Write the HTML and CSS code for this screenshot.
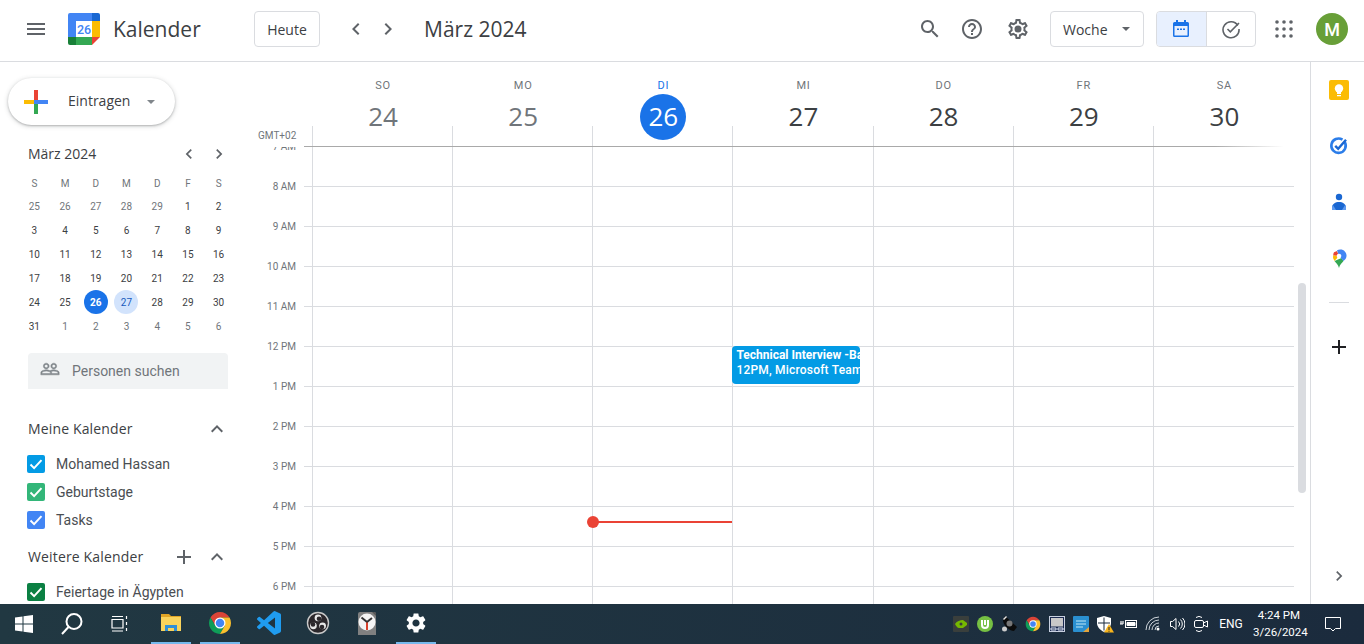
FILE: index.html
```html
<!DOCTYPE html>
<html lang="de">
<head>
  <meta charset="UTF-8" />
  <title>Kalender - März 2024</title>
  <link rel="stylesheet" href="styles.css">
</head>
<body>
  <!-- Shared icons -->
  <svg class="icon-defs" width="0" height="0">
    <symbol id="i-left" viewBox="0 0 24 24"><path d="M15.41 7.41L14 6l-6 6 6 6 1.41-1.41L10.83 12z"/></symbol>
    <symbol id="i-right" viewBox="0 0 24 24"><path d="M10 6L8.59 7.41 13.17 12l-4.58 4.59L10 18l6-6z"/></symbol>
    <symbol id="i-up" viewBox="0 0 24 24"><path d="M12 8l-6 6 1.41 1.41L12 10.83l4.59 4.58L18 14z"/></symbol>
    <symbol id="i-add" viewBox="0 0 24 24"><path d="M19 13h-6v6h-2v-6H5v-2h6V5h2v6h6v2z"/></symbol>
    <symbol id="i-check" viewBox="0 0 18 18"><path d="M3.5 9.5l3.6 3.6 7.4-8" fill="none" stroke="#fff" stroke-width="2"/></symbol>
    <symbol id="i-chrome" viewBox="0 0 48 48">
      <path fill="#db4437" d="M24 13H43.05A22 22 0 0 0 4.95 13L14.47 29.5Z"/>
      <path fill="#0f9d58" d="M14.47 29.5L4.95 13A22 22 0 0 0 24 46L33.53 29.5Z"/>
      <path fill="#fbc02d" d="M33.53 29.5L24 46A22 22 0 0 0 43.05 13H24Z"/>
      <circle cx="24" cy="24" r="11" fill="#fff"/>
      <circle cx="24" cy="24" r="8.5" fill="#4285f4"/>
    </symbol>
  </svg>

  <div class="app">
    <header class="topbar">
      <div class="brand">
        <svg class="icon menu-icon" viewBox="0 0 24 24"><path d="M3 18h18v-2H3v2zm0-5h18v-2H3v2zm0-7v2h18V6H3z"/></svg>
        <svg class="logo" viewBox="0 0 32 32">
          <path fill="#4285f4" d="M2 0h22v8H8v16H0V2a2 2 0 0 1 2-2z"/>
          <path fill="#1967d2" d="M24 0h6a2 2 0 0 1 2 2v6h-8z"/>
          <path fill="#fbbc04" d="M24 8h8v16h-8z"/>
          <path fill="#34a853" d="M8 24h16v8H8z"/>
          <path fill="#188038" d="M0 24h8v8H2a2 2 0 0 1-2-2z"/>
          <path fill="#ea4335" d="M24 24h8l-8 8z"/>
          <rect x="8" y="8" width="16" height="16" fill="#fff"/>
          <text x="16" y="20.500" class="logo-num">26</text>
        </svg>
        <span class="brand-name">Kalender</span>
      </div>
      <button class="outline-btn today-btn">Heute</button>
      <svg class="icon nav-icon"><use href="#i-left"/></svg>
      <svg class="icon nav-icon next"><use href="#i-right"/></svg>
      <div class="top-title">März 2024</div>

      <div class="top-right">
        <svg class="icon" viewBox="0 0 24 24"><path d="M15.5 14h-.79l-.28-.27C15.41 12.59 16 11.11 16 9.5 16 5.91 13.09 3 9.5 3S3 5.91 3 9.5 5.91 16 9.5 16c1.61 0 3.09-.59 4.23-1.57l.27.28v.79l5 4.99L20.49 19l-4.99-5zm-6 0C7.01 14 5 11.99 5 9.5S7.01 5 9.5 5 14 7.01 14 9.5 11.99 14 9.5 14z"/></svg>
        <svg class="icon help-icon" viewBox="0 0 24 24"><path d="M11 18h2v-2h-2v2zm1-16C6.48 2 2 6.48 2 12s4.48 10 10 10 10-4.48 10-10S17.52 2 12 2zm0 18c-4.41 0-8-3.59-8-8s3.59-8 8-8 8 3.59 8 8-3.59 8-8 8zm0-14c-2.21 0-4 1.79-4 4h2c0-1.1.9-2 2-2s2 .9 2 2c0 2-3 1.75-3 5h2c0-2.25 3-2.5 3-5 0-2.21-1.79-4-4-4z"/></svg>
        <svg class="icon gear-icon" viewBox="0 0 24 24"><path d="M19.43 12.98c.04-.32.07-.64.07-.98 0-.34-.03-.66-.07-.98l2.11-1.65c.19-.15.24-.42.12-.64l-2-3.46c-.09-.16-.26-.25-.44-.25-.06 0-.12.01-.17.03l-2.49 1c-.52-.4-1.08-.73-1.69-.98l-.38-2.65C14.46 2.18 14.25 2 14 2h-4c-.25 0-.46.18-.49.42l-.38 2.65c-.61.25-1.17.59-1.69.98l-2.49-1c-.06-.02-.12-.03-.18-.03-.17 0-.34.09-.43.25l-2 3.46c-.13.22-.07.49.12.64l2.11 1.65c-.04.32-.07.65-.07.98 0 .33.03.66.07.98l-2.11 1.65c-.19.15-.24.42-.12.64l2 3.46c.09.16.26.25.44.25.06 0 .12-.01.17-.03l2.49-1c.52.4 1.08.73 1.69.98l.38 2.65c.03.24.24.42.49.42h4c.25 0 .46-.18.49-.42l.38-2.65c.61-.25 1.17-.59 1.69-.98l2.49 1c.06.02.12.03.18.03.17 0 .34-.09.43-.25l2-3.46c.12-.22.07-.49-.12-.64l-2.11-1.65zm-1.98-1.71c.04.31.05.52.05.73 0 .21-.02.43-.05.73l-.14 1.13.89.7 1.08.84-.7 1.21-1.27-.51-1.04-.42-.9.68c-.43.32-.84.56-1.25.73l-1.06.43-.16 1.13-.2 1.35h-1.4l-.19-1.35-.16-1.13-1.06-.43c-.43-.18-.83-.41-1.23-.71l-.91-.7-1.06.43-1.27.51-.7-1.21 1.08-.84.89-.7-.14-1.13c-.03-.31-.05-.54-.05-.74s.02-.43.05-.73l.14-1.13-.89-.7-1.08-.84.7-1.21 1.27.51 1.04.42.9-.68c.43-.32.84-.56 1.25-.73l1.06-.43.16-1.13.2-1.35h1.39l.19 1.35.16 1.13 1.06.43c.43.18.83.41 1.23.71l.91.7 1.06-.43 1.27-.51.7 1.21-1.07.85-.89.7.14 1.13zM12 8.5a3.5 3.5 0 1 0 0 7 3.5 3.5 0 0 0 0-7z"/></svg>
        <button class="outline-btn view-btn">Woche <span class="caret"></span></button>
        <div class="toggle">
          <div class="toggle-item active">
            <svg width="20" height="20" viewBox="0 0 20 20"><path fill="#1a73e8" d="M5 1h2v2h6V1h2v2h1.5A1.5 1.5 0 0 1 18 4.500v12a1.500 1.500 0 0 1-1.500 1.500h-13A1.500 1.500 0 0 1 2 16.500v-12A1.500 1.500 0 0 1 3.500 3H5zM3.500 7v9.500h13V7zM6 9.500h2v1.500H6zm3 0h2v1.500H9zm3 0h2v1.500h-2z"/></svg>
          </div>
          <div class="toggle-item">
            <svg width="20" height="20" viewBox="0 0 20 20" fill="none" stroke="#5f6368" stroke-width="1.600"><path d="M16.800 6.500A8 8 0 1 0 18 10"/><path d="M6.500 10l2.800 2.800L18 4"/></svg>
          </div>
        </div>
        <svg class="icon apps-icon" viewBox="0 0 24 24">
          <circle cx="5" cy="5" r="1.800"/><circle cx="12" cy="5" r="1.800"/><circle cx="19" cy="5" r="1.800"/>
          <circle cx="5" cy="12" r="1.800"/><circle cx="12" cy="12" r="1.800"/><circle cx="19" cy="12" r="1.800"/>
          <circle cx="5" cy="19" r="1.800"/><circle cx="12" cy="19" r="1.800"/><circle cx="19" cy="19" r="1.800"/>
        </svg>
        <div class="avatar">M</div>
      </div>
    </header>

    <div class="content">
      <!-- Left sidebar -->
      <aside class="sidebar">
        <button class="create-btn">
          <svg width="24" height="24" viewBox="0 0 24 24">
            <path fill="#ea4335" d="M10 0h4v10h-4z"/>
            <path fill="#4285f4" d="M14 10h10v4H14z"/>
            <path fill="#34a853" d="M10 14h4v10h-4z"/>
            <path fill="#fbbc04" d="M0 10h10v4H0z"/>
            <path fill="#4285f4" d="M10 10h4v4h-4z"/>
          </svg>
          <span class="create-label">Eintragen</span>
          <span class="caret create-caret"></span>
        </button>

        <div class="mini-head">
          <span class="mini-title">März 2024</span>
          <svg class="mini-nav"><use href="#i-left"/></svg>
          <svg class="mini-nav"><use href="#i-right"/></svg>
        </div>
        <div class="mini-grid">
          <span class="wd">S</span><span class="wd">M</span><span class="wd">D</span><span class="wd">M</span><span class="wd">D</span><span class="wd">F</span><span class="wd">S</span>
          <span class="off">25</span><span class="off">26</span><span class="off">27</span><span class="off">28</span><span class="off">29</span><span>1</span><span>2</span>
          <span>3</span><span>4</span><span>5</span><span>6</span><span>7</span><span>8</span><span>9</span>
          <span>10</span><span>11</span><span>12</span><span>13</span><span>14</span><span>15</span><span>16</span>
          <span>17</span><span>18</span><span>19</span><span>20</span><span>21</span><span>22</span><span>23</span>
          <span>24</span><span>25</span><span class="today">26</span><span class="picked">27</span><span>28</span><span>29</span><span>30</span>
          <span>31</span><span class="off">1</span><span class="off">2</span><span class="off">3</span><span class="off">4</span><span class="off">5</span><span class="off">6</span>
        </div>

        <div class="people-search">
          <svg width="20" height="20" viewBox="0 0 24 24"><path d="M16.500 13c-1.200 0-3.070.34-4.500 1-1.430-.67-3.300-1-4.500-1C5.330 13 1 14.080 1 16.250V19h22v-2.750c0-2.170-4.330-3.250-6.500-3.250zm-4 4.500h-10v-1.250c0-.54 2.560-1.750 5-1.750s5 1.210 5 1.750v1.250zm9 0H14v-1.250c0-.46-.2-.86-.52-1.220.88-.3 1.960-.53 3.020-.53 2.440 0 5 1.210 5 1.750v1.250zM7.500 12c1.930 0 3.500-1.570 3.500-3.500S9.430 5 7.500 5 4 6.570 4 8.500 5.570 12 7.500 12zm0-5.500c1.100 0 2 .9 2 2s-.9 2-2 2-2-.9-2-2 .9-2 2-2zm9 5.500c1.930 0 3.500-1.570 3.500-3.500S18.430 5 16.500 5 13 6.570 13 8.500s1.570 3.500 3.500 3.500zm0-5.500c1.100 0 2 .9 2 2s-.9 2-2 2-2-.9-2-2 .9-2 2-2z"/></svg>
          <span>Personen suchen</span>
        </div>

        <div class="cal-head first">
          <span>Meine Kalender</span>
          <svg class="icon"><use href="#i-up"/></svg>
        </div>
        <ul class="cal-list">
          <li><span class="check c-blue"><svg width="18" height="18"><use href="#i-check"/></svg></span>Mohamed Hassan</li>
          <li><span class="check c-green"><svg width="18" height="18"><use href="#i-check"/></svg></span>Geburtstage</li>
          <li><span class="check c-tasks"><svg width="18" height="18"><use href="#i-check"/></svg></span>Tasks</li>
        </ul>

        <div class="cal-head second">
          <span>Weitere Kalender</span>
          <svg class="icon add-icon"><use href="#i-add"/></svg>
          <svg class="icon"><use href="#i-up"/></svg>
        </div>
        <ul class="cal-list">
          <li><span class="check c-holiday"><svg width="18" height="18"><use href="#i-check"/></svg></span>Feiertage in Ägypten</li>
        </ul>
      </aside>

      <!-- Week view -->
      <main class="week">
        <div class="week-inner">
          <div class="week-head">
            <div class="gmt">GMT+02</div>
            <div class="head-days">
              <div class="head-day past"><span class="dow">SO</span><span class="num">24</span></div>
              <div class="head-day past"><span class="dow">MO</span><span class="num">25</span></div>
              <div class="head-day now"><span class="dow">DI</span><span class="num">26</span></div>
              <div class="head-day"><span class="dow">MI</span><span class="num">27</span></div>
              <div class="head-day"><span class="dow">DO</span><span class="num">28</span></div>
              <div class="head-day"><span class="dow">FR</span><span class="num">29</span></div>
              <div class="head-day"><span class="dow">SA</span><span class="num">30</span></div>
            </div>
          </div>
          <div class="head-rule"></div>
          <div class="week-body">
            <div class="time-col">
              <div class="hour">7 AM</div>
              <div class="hour">8 AM</div>
              <div class="hour">9 AM</div>
              <div class="hour">10 AM</div>
              <div class="hour">11 AM</div>
              <div class="hour">12 PM</div>
              <div class="hour">1 PM</div>
              <div class="hour">2 PM</div>
              <div class="hour">3 PM</div>
              <div class="hour">4 PM</div>
              <div class="hour">5 PM</div>
              <div class="hour">6 PM</div>
            </div>
            <div class="day-cols">
              <div class="day-col"></div>
              <div class="day-col"></div>
              <div class="day-col"><div class="now-line"></div></div>
              <div class="day-col">
                <div class="event">
                  <div class="event-title">Technical Interview -Back</div>
                  <div class="event-meta">12PM, Microsoft Teams</div>
                </div>
              </div>
              <div class="day-col"></div>
              <div class="day-col"></div>
              <div class="day-col"></div>
            </div>
          </div>
        </div>
        <div class="scroll-track"><div class="scroll-thumb"></div></div>
      </main>

      <!-- Right add-on strip -->
      <aside class="addons">
        <svg width="20" height="20" viewBox="0 0 20 20">
          <rect width="20" height="20" rx="2" fill="#fbbc04"/>
          <circle cx="10" cy="8.500" r="4.200" fill="#fff"/>
          <path fill="#fff" d="M8 12h4v2H8zM8 15h4v1.300H8z"/>
        </svg>
        <svg width="20" height="20" viewBox="0 0 20 20">
          <path d="M15.700 6A7.200 7.200 0 1 1 13.500 3.700" fill="none" stroke="#2b7de9" stroke-width="2.600"/>
          <path d="M6.200 9.800l3 3 7.800-9" fill="none" stroke="#1a67d2" stroke-width="2.400"/>
        </svg>
        <svg width="20" height="20" viewBox="0 0 20 20">
          <circle cx="10" cy="5" r="3.200" fill="#1a67d2"/>
          <path fill="#1a67d2" d="M3 18v-2.500C3 12 6.500 10 10 10s7 2 7 5.500V18z"/>
          <path fill="#5f9bf0" d="M3 18v-2.500c0-1 .3-1.900.9-2.600L7 18zM17 18v-2.500c0-1-.3-1.900-.9-2.600L13 18z"/>
        </svg>
        <svg class="maps-icon" width="20" height="20" viewBox="0 0 20 20">
          <path fill="#34a853" d="M5.500 12c1.500 2 3.800 3.700 4.500 7 .7-3.300 3-5 4.500-7l-2-3z"/>
          <path fill="#fbbc04" d="M4.200 6.200A6 6 0 0 0 5.500 12L10 7z"/>
          <path fill="#ea4335" d="M5 3.200A6 6 0 0 0 4.200 6.200L10 7l-2-5z"/>
          <path fill="#4285f4" d="M8 1.300A6.200 6.200 0 0 1 14.500 12L10 7z"/>
          <circle cx="10" cy="7" r="2.300" fill="#fff"/>
        </svg>
        <div class="addon-divider"></div>
        <svg class="addon-plus" width="24" height="24"><use href="#i-add"/></svg>
        <svg class="addon-more" width="20" height="20"><use href="#i-right"/></svg>
      </aside>
    </div>
  </div>

  <!-- Windows taskbar -->
  <footer class="taskbar">
    <div class="task-fixed">
      <svg width="20" height="20" viewBox="0 0 20 20"><path fill="#fff" d="M1 3.500l7.500-1v7H1zM9.500 2.300L19 1v8.500H9.500zM1 10.500h7.500v7l-7.500-1zM9.500 10.500H19V19l-9.500-1.300z"/></svg>
    </div>
    <div class="task-fixed">
      <svg width="24" height="24" viewBox="0 0 24 24" fill="none" stroke="#fff" stroke-width="2"><circle cx="14" cy="9.500" r="7.500"/><path d="M8.500 15l-6.500 7"/></svg>
    </div>
    <div class="task-fixed">
      <svg width="18" height="18" viewBox="0 0 18 18" fill="none" stroke="#fff" stroke-width="1.200"><path d="M1 4.500h11v8.500H1zM1 1.500h11M1 16h11M15.500 1v3M15.500 7v3M15.500 13v3"/></svg>
    </div>
    <div class="task-apps">
      <div class="task-app active">
        <svg width="24" height="24" viewBox="0 0 24 24">
          <path fill="#e0a526" d="M2 3h8l2 2h10v3H2z"/>
          <path fill="#f9d35c" d="M2 6h20v14H2z"/>
          <path fill="#2f8fd8" d="M6 14h12v6h-3v-3H9v3H6z"/>
        </svg>
      </div>
      <div class="task-app active"><svg width="24" height="24"><use href="#i-chrome"/></svg></div>
      <div class="task-app">
        <svg width="24" height="24" viewBox="0 0 24 24"><path fill="#1f9cf0" d="M23.150 2.587L18.210.21a1.494 1.494 0 0 0-1.705.29l-9.460 8.630-4.120-3.128a.999.999 0 0 0-1.276.057L.327 7.261A1 1 0 0 0 .326 8.740L3.899 12 .326 15.260a1 1 0 0 0 .001 1.479L1.650 17.940a.999.999 0 0 0 1.276.057l4.120-3.128 9.460 8.630a1.492 1.492 0 0 0 1.704.29l4.942-2.377A1.500 1.500 0 0 0 24 20.060V3.939a1.500 1.500 0 0 0-.85-1.352zm-5.146 14.861L10.826 12l7.178-5.448v10.896z"/></svg>
      </div>
      <div class="task-app">
        <svg width="24" height="24" viewBox="0 0 24 24">
          <circle cx="12" cy="12" r="10.500" fill="#2b272b" stroke="#c9c9c9" stroke-width="1.400"/>
          <circle cx="12" cy="6.800" r="3.400" fill="#e8e8e8"/><circle cx="13" cy="7.800" r="2.300" fill="#2b272b"/>
          <circle cx="7.400" cy="14.800" r="3.400" fill="#e8e8e8"/><circle cx="7" cy="13.400" r="2.300" fill="#2b272b"/>
          <circle cx="16.600" cy="14.800" r="3.400" fill="#e8e8e8"/><circle cx="16" cy="16" r="2.300" fill="#2b272b"/>
        </svg>
      </div>
      <div class="task-app">
        <svg width="24" height="24" viewBox="0 0 24 24">
          <path fill="#808080" d="M3 3a2 2 0 0 1 2-2h14a2 2 0 0 1 2 2v21H3z"/>
          <path fill="#555" d="M17 1h2a2 2 0 0 1 2 2v2z"/>
          <circle cx="12" cy="11" r="8.500" fill="#f4f4f4"/>
          <path d="M12 11V19" stroke="#d8402a" stroke-width="2"/>
          <path d="M12 11L6.500 6.500M12 11l5-4" stroke="#333" stroke-width="2"/>
        </svg>
      </div>
      <div class="task-app active">
        <svg width="24" height="24" viewBox="0 0 24 24"><path fill="#fff" d="M19.140 12.940c.04-.3.06-.61.06-.94 0-.32-.02-.64-.07-.94l2.030-1.580c.18-.14.23-.41.12-.61l-1.920-3.320c-.12-.22-.37-.29-.59-.22l-2.390.96c-.5-.38-1.030-.7-1.620-.94l-.36-2.540c-.04-.24-.24-.41-.48-.41h-3.840c-.24 0-.43.17-.47.41l-.36 2.540c-.59.24-1.130.57-1.620.94l-2.390-.96c-.22-.08-.47 0-.59.22L2.740 8.870c-.12.21-.08.47.12.61l2.030 1.580c-.05.3-.09.63-.09.94s.02.64.07.94l-2.030 1.580c-.18.14-.23.41-.12.61l1.920 3.320c.12.22.37.29.59.22l2.390-.96c.5.38 1.030.7 1.620.94l.36 2.540c.05.24.24.41.48.41h3.840c.24 0 .44-.17.47-.41l.36-2.540c.59-.24 1.130-.56 1.620-.94l2.390.96c.22.08.47 0 .59-.22l1.920-3.320c.12-.22.07-.47-.12-.61l-2.010-1.580zM12 15.600c-1.980 0-3.600-1.620-3.600-3.600s1.620-3.600 3.600-3.600 3.600 1.620 3.600 3.600-1.620 3.600-3.600 3.600z"/></svg>
      </div>
    </div>

    <div class="tray">
      <div class="tray-item"><svg width="16" height="16" viewBox="0 0 16 16"><rect width="16" height="16" rx="1" fill="#3a3f3c"/><path fill="#76b900" d="M2 8c2-3 5-4 8-4l4 3v2l-4 3H6C4.500 12 3 10 2 8z"/><circle cx="8" cy="8" r="1.500" fill="#3a3f3c"/></svg></div>
      <div class="tray-item"><svg width="16" height="16" viewBox="0 0 16 16"><circle cx="8" cy="8" r="8" fill="#76c043"/><path d="M5 4v5a3 3 0 0 0 6 0V4" fill="none" stroke="#fff" stroke-width="2"/><path d="M8 4v5" stroke="#fff" stroke-width="2"/></svg></div>
      <div class="tray-item"><svg width="16" height="16" viewBox="0 0 16 16"><path fill="#0c0c0c" d="M4 0l12 11-3 4C8 15 2 9 2 4z"/><path fill="#e6e6e6" d="M5 0l1 1-3 3-1-1z"/><circle cx="8.500" cy="7.500" r="3" fill="#777"/><circle cx="3.500" cy="13" r="2.500" fill="#ccc"/></svg></div>
      <div class="tray-item"><svg width="16" height="16"><use href="#i-chrome"/></svg></div>
      <div class="tray-item"><svg width="16" height="16" viewBox="0 0 16 16"><rect x=".5" y=".5" width="15" height="15" fill="#1b2a50" stroke="#c8d0e0"/><rect x="2" y="2" width="12" height="8.500" fill="#c8c8c8"/><path d="M2 12h5v2H2zM9 12h5v2H9z" fill="none" stroke="#dfe6f5"/></svg></div>
      <div class="tray-item"><svg width="16" height="16" viewBox="0 0 16 16"><rect width="16" height="16" rx="1" fill="#2a8fd0"/><path d="M3 5h10M3 8h10M3 11h7" stroke="#bde7f5" stroke-width="1.200"/><path d="M10 16l6-5v5z" fill="#e3a33a"/></svg></div>
      <div class="tray-item"><svg width="18" height="18" viewBox="0 0 18 18"><path fill="#fff" d="M8 1l7 2v5c0 4-3 7-7 9-4-2-7-5-7-9V3z"/><path fill="#1b2b3d" d="M7.500 2.500h1v13h-1zM2 7.500h12v1H2z"/><path fill="#f9b51c" d="M13 9l5 8.500H8z"/><path fill="#222" d="M12.500 12h1v3h-1zM12.500 15.700h1v1h-1z"/></svg></div>
      <div class="tray-item"><svg width="18" height="12" viewBox="0 0 18 12" fill="none" stroke="#fff"><rect x="5.500" y="2.500" width="11" height="7"/><path d="M7 4.500h8v3H7z" fill="#fff"/><path d="M0 6h3M1 3v3M3 3v3" stroke-width="1.200"/></svg></div>
      <div class="tray-item"><svg width="16" height="16" viewBox="0 0 16 16" fill="none" stroke="#cfd6dc" stroke-width="1"><path d="M1 14A13 13 0 0 1 14 1M4 14A10 10 0 0 1 14 4M7 14A7 7 0 0 1 14 7M10 14A4 4 0 0 1 14 10"/><circle cx="13" cy="13" r="1.500" fill="#fff" stroke="none"/></svg></div>
      <div class="tray-item"><svg width="16" height="16" viewBox="0 0 16 16" fill="none" stroke="#fff"><path d="M1.500 5.500h2l3.500-3v11l-3.500-3h-2zM9.500 5.500a3.500 3.500 0 0 1 0 5M11.500 3.500a6.500 6.500 0 0 1 0 9M13.500 2a8.500 8.500 0 0 1 0 12"/></svg></div>
      <div class="tray-item"><svg width="16" height="18" viewBox="0 0 16 18" fill="none" stroke="#fff"><rect x="1.500" y="5.500" width="9" height="7" rx="1.500"/><path d="M10.500 8l4-2v6l-4-2zM3 2.500a5 5 0 0 1 6 0M3 15.500a5 5 0 0 0 6 0"/></svg></div>
    </div>
    <div class="tray-lang">ENG</div>
    <div class="tray-clock"><div>4:24 PM</div><div>3/26/2024</div></div>
    <div class="tray-note">
      <svg width="18" height="18" viewBox="0 0 18 18" fill="none" stroke="#fff"><path d="M1.500 2.500h15v11h-5l-2.500 2.500-2.500-2.500h-5z"/></svg>
    </div>
  </footer>
</body>
</html>
```

FILE: styles.css
```css
* {
  box-sizing: border-box;
}

html, body {
  height: 100%;
}

body {
  margin: 0;
  display: flex;
  flex-direction: column;
  overflow: hidden;
  background: #fff;
  color: #3c4043;
  font-family: Roboto, 'Liberation Sans', sans-serif;
}

.icon-defs {
  display: block;
  height: 0;
}

.icon {
  width: 24px;
  height: 24px;
  flex: none;
  fill: #5f6368;
}

button {
  font-family: inherit;
  background: #fff;
  cursor: pointer;
}

.app {
  height: 604px;
  flex: none;
  display: flex;
  flex-direction: column;
  overflow: hidden;
}

/* Top bar */
.topbar {
  height: 62px;
  flex: none;
  display: flex;
  align-items: center;
  padding-bottom: 3px;
  border-bottom: 1px solid #dadce0;
}

.brand {
  width: 254px;
  flex: none;
  display: flex;
  align-items: center;
  padding-left: 24px;
}

.logo {
  width: 32px;
  height: 32px;
  margin-left: 20px;
}

.logo-num {
  font-family: Roboto, sans-serif;
  font-size: 12.500px;
  font-weight: 500;
  fill: #4285f4;
  text-anchor: middle;
}

.brand-name {
  margin-left: 13px;
  padding-bottom: 1px;
  font-family: 'Open Sans', sans-serif;
  font-size: 21px;
  color: #3c4043;
}

.outline-btn {
  height: 36px;
  border: 1px solid #dadce0;
  border-radius: 4px;
  font-family: 'Open Sans', sans-serif;
  font-size: 14px;
  font-weight: 500;
  color: #3c4043;
}

.today-btn {
  width: 66px;
  padding: 0;
}

.nav-icon {
  width: 24px;
  height: 24px;
  margin-left: 24px;
  fill: #5f6368;
}

.nav-icon.next {
  margin-left: 8px;
}

.top-title {
  margin-left: 24px;
  padding-bottom: 1px;
  font-family: 'Open Sans', sans-serif;
  font-size: 21px;
  color: #3c4043;
}

.top-right {
  margin-left: auto;
  display: flex;
  align-items: center;
  padding-right: 16px;
}

.help-icon {
  margin-left: 18px;
}

.gear-icon {
  margin-left: 22px;
}

.view-btn {
  width: 94px;
  margin-left: 20px;
  display: flex;
  align-items: center;
  padding: 0 0 0 12px;
}

.caret {
  width: 0;
  height: 0;
  border-left: 4px solid transparent;
  border-right: 4px solid transparent;
  border-top: 4px solid #5f6368;
}

.view-btn .caret {
  margin-left: 14px;
}

.toggle {
  margin-left: 12px;
  width: 100px;
  height: 36px;
  display: flex;
  border: 1px solid #dadce0;
  border-radius: 4px;
  overflow: hidden;
}

.toggle-item {
  flex: 1;
  display: flex;
  align-items: center;
  justify-content: center;
}

.toggle-item.active {
  background: #e8f0fe;
  border-right: 1px solid #dadce0;
}

.apps-icon {
  margin-left: 16px;
}

.avatar {
  width: 32px;
  height: 32px;
  margin-left: 20px;
  border-radius: 50%;
  background: #689f38;
  color: #fff;
  font-size: 18px;
  font-weight: 500;
  display: flex;
  align-items: center;
  justify-content: center;
}

.content {
  flex: 1;
  min-height: 0;
  display: flex;
}

/* Sidebar */
.sidebar {
  width: 256px;
  flex: none;
  overflow: hidden;
}

.create-btn {
  margin: 16px 0 0 8px;
  width: 167px;
  height: 47px;
  padding: 0 0 0 16px;
  display: flex;
  align-items: center;
  border: none;
  border-radius: 24px;
  box-shadow: 0 1px 2px rgba(60, 64, 67, .3), 0 1px 4px 1px rgba(60, 64, 67, .15);
}

.create-label {
  margin-left: 20px;
  padding-bottom: 3px;
  font-family: 'Open Sans', sans-serif;
  font-size: 14px;
  font-weight: 500;
  color: #3c4043;
}

.create-caret {
  margin-left: 17px;
  border-top-color: #80868b;
}

.mini-head {
  margin: 17px 0 0 28px;
  width: 206px;
  height: 24px;
  display: flex;
  align-items: center;
}

.mini-title {
  flex: 1;
  padding-bottom: 2px;
  font-family: 'Open Sans', sans-serif;
  font-size: 14px;
  font-weight: 500;
  color: #3c4043;
}

.mini-nav {
  width: 20px;
  height: 20px;
  margin: 0 5px;
  fill: #5f6368;
}

.mini-grid {
  margin: 4px 0 0 19px;
  width: 215px;
  display: grid;
  grid-template-columns: repeat(7, 1fr);
  grid-auto-rows: 24px;
  font-size: 10px;
  color: #3c4043;
}

.mini-grid span {
  justify-self: center;
  width: 24px;
  height: 24px;
  border-radius: 50%;
  display: flex;
  align-items: center;
  justify-content: center;
}

.mini-grid .wd {
  padding-top: 2px;
}

.mini-grid .wd,
.mini-grid .off {
  color: #70757a;
}

.mini-grid .today {
  background: #1a73e8;
  color: #fff;
  font-weight: 700;
}

.mini-grid .picked {
  background: #d2e3fc;
  color: #185abc;
}

.people-search {
  margin: 15px 0 0 28px;
  width: 200px;
  height: 36px;
  padding-left: 12px;
  display: flex;
  align-items: center;
  gap: 12px;
  background: #f1f3f4;
  border-radius: 4px 4px 0 0;
  font-size: 14px;
  color: #70757a;
}

.people-search svg {
  margin-bottom: 4px;
  fill: #80868b;
  stroke: #80868b;
  stroke-width: .6;
}

.cal-head {
  width: 229px;
  height: 24px;
  padding-left: 28px;
  display: flex;
  align-items: center;
  font-family: 'Open Sans', sans-serif;
  font-size: 14px;
  font-weight: 500;
  letter-spacing: .15px;
  color: #3c4043;
}

.cal-head span {
  flex: 1;
  padding-bottom: 2px;
}

.cal-head.first {
  margin-top: 28px;
}

.cal-head.second {
  margin-top: 11px;
}

.add-icon {
  margin-right: 9px;
}

.cal-list {
  margin: 9px 0 0;
  padding: 0 0 0 27px;
  list-style: none;
  font-size: 14px;
  color: #4a4e52;
}

.cal-list li {
  height: 28px;
  display: flex;
  align-items: center;
  gap: 11px;
}

.check {
  width: 18px;
  height: 18px;
  border-radius: 2px;
}

.check svg {
  display: block;
}

.c-blue { background: #039be5; }
.c-green { background: #33b679; }
.c-tasks { background: #4285f4; }
.c-holiday { background: #0b8043; }

/* Week view */
.week {
  flex: 1;
  min-width: 0;
  display: flex;
}

.week-inner {
  flex: 1;
  min-width: 0;
  display: flex;
  flex-direction: column;
}

.week-head {
  height: 84px;
  flex: none;
  display: flex;
}

.gmt {
  width: 56px;
  flex: none;
  padding: 68px 0 0 2px;
  font-size: 10px;
  color: #70757a;
}

.head-days {
  flex: 1;
  display: grid;
  grid-template-columns: repeat(6, 140.150px) 1fr;
}

.head-day {
  display: flex;
  flex-direction: column;
  align-items: center;
  padding: 17px 0 0 2px;
  background: linear-gradient(#dadce0, #dadce0) left bottom / 1px 20px no-repeat;
}

.dow {
  height: 13px;
  font-size: 11px;
  letter-spacing: .8px;
  line-height: 13px;
  color: #70757a;
}

.num {
  width: 46px;
  height: 46px;
  margin-top: 2px;
  padding-bottom: 2px;
  border-radius: 50%;
  display: flex;
  align-items: center;
  justify-content: center;
  font-family: 'Open Sans', sans-serif;
  font-size: 26px;
  color: #3c4043;
}

.past .num {
  color: #70757a;
}

.now .dow {
  color: #1a73e8;
}

.now .num {
  background: #1a73e8;
  color: #fff;
}

.head-rule {
  height: 1px;
  flex: none;
  margin-left: 48px;
  background: linear-gradient(to right, #a9a9a9 92%, #fff 99%);
}

.week-body {
  flex: 1;
  min-height: 0;
  display: flex;
  overflow: hidden;
}

.time-col {
  width: 56px;
  flex: none;
  overflow: hidden;
  background: repeating-linear-gradient(to bottom, transparent 0 39px, #dadce0 39px 40px) right top / 8px 100% no-repeat;
}

.hour {
  height: 40px;
  padding-right: 16px;
  display: flex;
  align-items: center;
  justify-content: flex-end;
  font-size: 10px;
  color: #70757a;
}

.hour:first-child {
  margin-top: -21px;
}

.day-cols {
  flex: 1;
  display: grid;
  grid-template-columns: repeat(6, 140.150px) 1fr;
}

.day-col {
  position: relative;
  border-left: 1px solid #dadce0;
  background: repeating-linear-gradient(to bottom, transparent 0 39px, #dadce0 39px 40px);
}

.event {
  position: absolute;
  top: 199px;
  left: -1px;
  width: 128px;
  height: 38px;
  padding: 2px 0 0 4px;
  border-radius: 4px;
  background: #039be5;
  color: #fff;
  font-size: 12px;
  line-height: 15px;
  white-space: nowrap;
  overflow: hidden;
}

.event-title {
  font-weight: 700;
}

.event-meta {
  font-weight: 500;
  letter-spacing: .2px;
}

.now-line {
  position: absolute;
  top: 374px;
  left: 0;
  right: 0;
  height: 2px;
  background: #ea4335;
}

.now-line::before {
  content: '';
  position: absolute;
  top: -5px;
  left: -6px;
  width: 12px;
  height: 12px;
  border-radius: 50%;
  background: #ea4335;
}

.scroll-track {
  width: 16px;
  flex: none;
  padding: 221px 4px 0;
}

.scroll-thumb {
  height: 210px;
  border-radius: 4px;
  background: #dadce0;
}

/* Add-on strip */
.addons {
  width: 54px;
  flex: none;
  padding: 18px 0 18px 3px;
  display: flex;
  flex-direction: column;
  align-items: center;
  gap: 36px;
  border-left: 1px solid #dadce0;
}

.maps-icon {
  margin-top: 1px;
}

.addon-divider {
  width: 20px;
  height: 1px;
  margin: -3px 0 -2px;
  background: #dadce0;
}

.addon-plus {
  margin-top: -2px;
  fill: #202124;
}

.addon-more {
  margin-top: auto;
  fill: #5f6368;
}

/* Taskbar */
.taskbar {
  height: 40px;
  flex: none;
  display: flex;
  align-items: center;
  background: linear-gradient(to right, #213842, #1b2b3d);
  color: #fff;
  font-size: 12px;
}

.task-fixed {
  width: 48px;
  height: 40px;
  display: flex;
  align-items: center;
  justify-content: center;
}

.task-apps {
  margin-left: 7px;
  display: flex;
  gap: 9px;
}

.task-app {
  width: 40px;
  height: 40px;
  display: flex;
  align-items: center;
  justify-content: center;
  border-bottom: 2px solid transparent;
}

.task-app.active {
  border-bottom-color: #76b9ed;
}

.tray {
  margin-left: auto;
  display: flex;
}

.tray-item {
  width: 24px;
  height: 40px;
  display: flex;
  align-items: center;
  justify-content: center;
}

.tray-lang {
  width: 36px;
  margin-right: 4px;
  text-align: center;
}

.tray-clock {
  width: 52px;
  font-size: 11.500px;
  line-height: 17px;
  white-space: nowrap;
  text-align: center;
}

.tray-note {
  width: 59px;
  padding-right: 3px;
  display: flex;
  align-items: center;
  justify-content: center;
}
```
